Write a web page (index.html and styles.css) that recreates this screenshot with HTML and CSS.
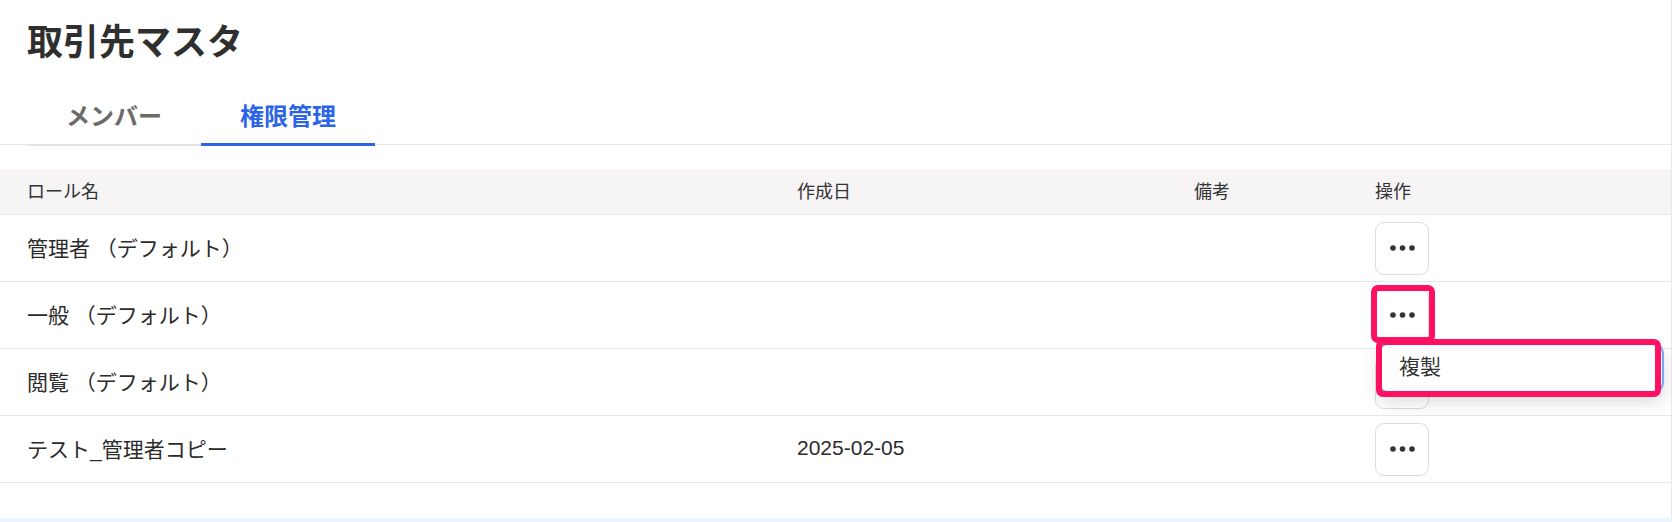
FILE: index.html
```html
<!DOCTYPE html>
<html lang="ja">
<head>
  <meta charset="UTF-8" />
  <meta name="viewport" content="width=device-width, initial-scale=1.0"/>
  <title>取引先マスタ</title>
  <link rel="stylesheet" href="styles.css">
</head>
<body>
  <div class="card">
    <h1 class="page-title">取引先マスタ</h1>

    <nav class="tabs">
      <a class="tab">メンバー</a>
      <a class="tab active">権限管理</a>
    </nav>

    <div class="role-table">
      <div class="row head">
        <div>ロール名</div>
        <div>作成日</div>
        <div>備考</div>
        <div>操作</div>
      </div>
      <div class="row">
        <div>管理者 （デフォルト）</div>
        <div></div>
        <div></div>
        <div class="ops"><button class="more-btn"><svg width="25" height="6" viewBox="0 0 25 6"><circle cx="3" cy="3" r="2.8"/><circle cx="12.5" cy="3" r="2.8"/><circle cx="22" cy="3" r="2.8"/></svg></button></div>
      </div>
      <div class="row">
        <div>一般 （デフォルト）</div>
        <div></div>
        <div></div>
        <div class="ops"><button class="more-btn"><svg width="25" height="6" viewBox="0 0 25 6"><circle cx="3" cy="3" r="2.8"/><circle cx="12.5" cy="3" r="2.8"/><circle cx="22" cy="3" r="2.8"/></svg></button></div>
      </div>
      <div class="row">
        <div>閲覧 （デフォルト）</div>
        <div></div>
        <div></div>
        <div class="ops"><button class="more-btn"><svg width="25" height="6" viewBox="0 0 25 6"><circle cx="3" cy="3" r="2.8"/><circle cx="12.5" cy="3" r="2.8"/><circle cx="22" cy="3" r="2.8"/></svg></button></div>
      </div>
      <div class="row">
        <div>テスト_管理者コピー</div>
        <div>2025-02-05</div>
        <div></div>
        <div class="ops"><button class="more-btn"><svg width="25" height="6" viewBox="0 0 25 6"><circle cx="3" cy="3" r="2.8"/><circle cx="12.5" cy="3" r="2.8"/><circle cx="22" cy="3" r="2.8"/></svg></button></div>
      </div>
    </div>

    <!-- row menu (opened on 一般) -->
    <div class="menu">
      <div class="menu-item">複製</div>
    </div>

    <!-- annotation marks -->
    <div class="mark mark-btn"></div>
    <div class="mark mark-menu"></div>
  </div>
</body>
</html>
```

FILE: styles.css
```css
body {
  margin: 0;
  background: #eef4fb;
  font-family: 'Liberation Sans', 'Noto Sans CJK JP', sans-serif;
  color: #2b2b2b;
}
.card {
  position: relative;
  background: white;
  height: 518px;
  border-right: 1px solid #e6e8ee;
  box-sizing: border-box;
}
.page-title {
  margin: 0;
  padding: 21px 27px 0;
  font-size: 36px;
  line-height: 44px;
  font-weight: bold;
  color: #2f2f2f;
}
.tabs {
  display: flex;
  margin-top: 27px;
  padding-left: 27px;
  height: 52px;
  border-bottom: 1px solid #e6e6e6;
}
.tab {
  width: 174px;
  height: 52px;
  line-height: 50px;
  text-align: center;
  font-size: 24px;
  font-weight: bold;
  color: #6b6b6b;
  border-bottom: 2px solid #e4e4e4;
  cursor: pointer;
}
.tab.active {
  color: #2c64e8;
  height: 51px;
  border-bottom: 3px solid #2c64e8;
}
.role-table {
  margin-top: 24px;
}
.row {
  display: grid;
  grid-template-columns: 770px 397px 181px 1fr;
  align-items: center;
  padding-left: 27px;
  height: 66px;
  border-bottom: 1px solid #e6e6e6;
  font-size: 21px;
}
.row > div {
  padding-bottom: 3px;
}
.row > .ops {
  padding-bottom: 0;
}
.row.head {
  height: 45px;
  background: #f6f4f5;
  font-size: 18px;
  color: #333;
}
.more-btn {
  display: flex;
  align-items: center;
  justify-content: center;
  width: 54px;
  height: 53px;
  padding: 0;
  background: white;
  border: 1px solid #dcdcdc;
  border-radius: 9px;
  cursor: pointer;
}
.more-btn svg {
  fill: #333;
}
.menu {
  position: absolute;
  left: 1378px;
  top: 342px;
  width: 286px;
  height: 52px;
  background: white;
  border-radius: 12px;
  box-shadow: 0 8px 18px rgba(0,0,0,0.14);
}
.menu-item {
  height: 100%;
  box-sizing: border-box;
  padding-left: 19px;
  line-height: 46px;
  font-size: 21px;
  color: #333;
  border: 2px solid #7ba5f5;
  border-radius: 12px;
}
.mark {
  position: absolute;
  border: 6px solid #ff1060;
  border-radius: 7px;
  box-sizing: border-box;
}
.mark-btn {
  left: 1371px;
  top: 285px;
  width: 64px;
  height: 58px;
}
.mark-menu {
  left: 1376px;
  top: 339px;
  width: 285px;
  height: 58px;
}
```
